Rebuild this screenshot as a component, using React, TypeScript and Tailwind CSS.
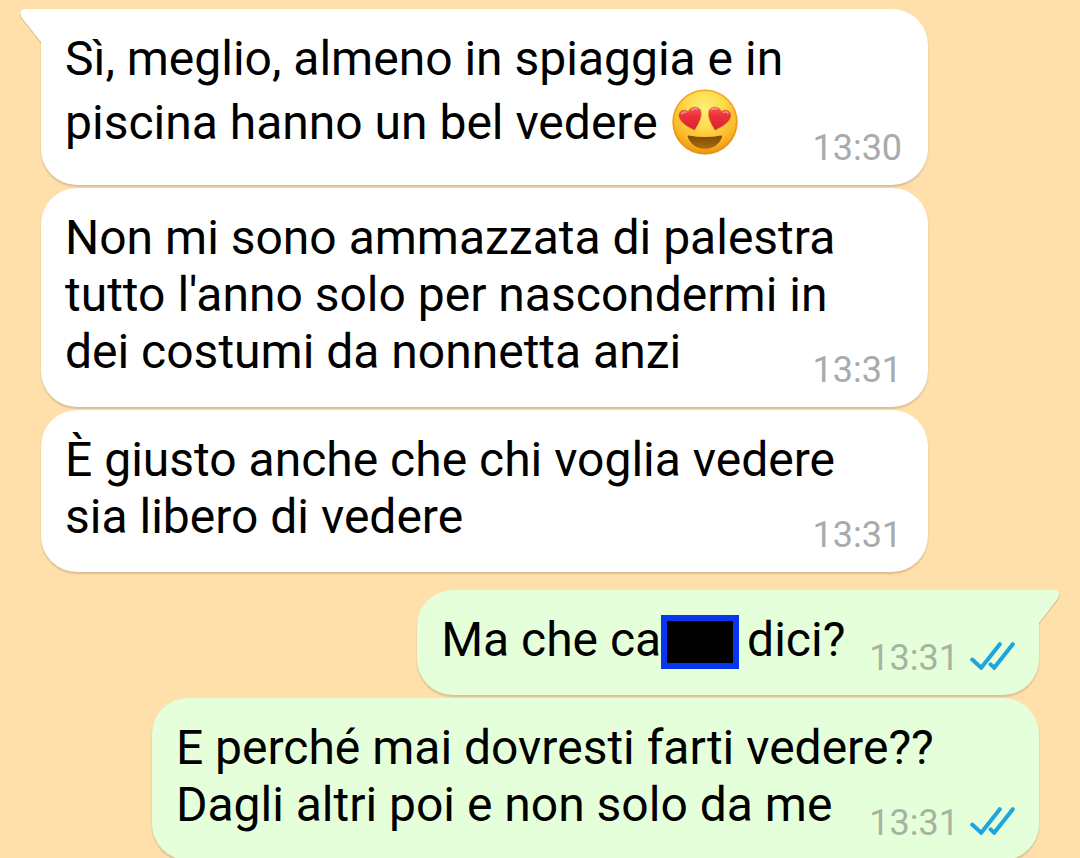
import type { ReactNode } from 'react';

interface Message {
  id: number;
  outgoing: boolean;
  time: string;
  lines: ReactNode[];
  // first message of a group gets the little tail
  tail?: boolean;
  // one-liners hug their text, the others take the full bubble width
  compact?: boolean;
}

function HeartEyes() {
  return (
    <svg
      viewBox="0 0 66 66"
      role="img"
      aria-label="😍"
      className="mt-0.5 mb-[3px] ml-0.5 inline-block size-[66px] align-[-19px]"
    >
      <defs>
        <radialGradient id="face" cx="0.5" cy="0.3" r="0.72">
          <stop offset="0" stopColor="#fff07a" />
          <stop offset="0.4" stopColor="#fedb4c" />
          <stop offset="0.75" stopColor="#fbb524" />
          <stop offset="1" stopColor="#e98c10" />
        </radialGradient>
        <linearGradient id="heart" x1="0" y1="0" x2="0" y2="1">
          <stop offset="0" stopColor="#f0575a" />
          <stop offset="0.4" stopColor="#ee3038" />
          <stop offset="1" stopColor="#d62330" />
        </linearGradient>
        <linearGradient id="mouth" x1="0" y1="0" x2="0" y2="1">
          <stop offset="0" stopColor="#7d4a06" />
          <stop offset="1" stopColor="#a56c10" />
        </linearGradient>
      </defs>
      <circle cx="33" cy="33" r="32.6" fill="url(#face)" />
      <circle cx="33" cy="33" r="31.8" fill="none" stroke="#e08a1a" strokeOpacity="0.6" strokeWidth="1.5" />
      <path
        d="M22.6 41.2C18 39 8.6 34.5 7 27.8C5.8 22.5 11.2 18.8 16.2 22.5C18.3 17 26.5 16.2 28.8 21.6C31 27.5 25.8 36 22.6 41.2Z"
        fill="url(#heart)"
        stroke="#d98a1c"
        strokeOpacity="0.6"
        strokeWidth="0.8"
      />
      <path
        d="M43 41.2C39.8 36 34.8 27.5 37 21.6C39.2 16.2 47.4 17 49.5 22.5C54.5 18.8 60 22.5 58.8 27.8C57.2 34.5 47.6 39 43 41.2Z"
        fill="url(#heart)"
        stroke="#d98a1c"
        strokeOpacity="0.6"
        strokeWidth="0.8"
      />
      <path d="M10 24.5Q11.5 22.3 14 23.2M20 21Q22 18.8 25 19.8" fill="none" stroke="#fa9a92" strokeWidth="1.4" strokeLinecap="round" />
      <path d="M39.5 20.8Q42 18.6 45 20.2M51.5 23.5Q54 22 56 24" fill="none" stroke="#fa9a92" strokeWidth="1.4" strokeLinecap="round" />
      <path
        d="M16.2 46.4Q33 49.5 49.4 46.4Q50.4 46.6 50 48C47.5 55.5 41 59.8 33 59.8C25 59.8 18.4 55.5 15.8 48Q15.3 46.6 16.2 46.4Z"
        fill="url(#mouth)"
      />
    </svg>
  );
}

function Ticks() {
  return (
    <svg viewBox="0 1 45 28" role="img" aria-label="Letto" className="mb-1 h-7 w-[45px] shrink-0">
      <g fill="none" stroke="#1ea5dc" strokeWidth="4" strokeLinecap="round" strokeLinejoin="miter">
        <path d="M2.2 18.6L11.2 26.8L29.8 3.2" />
        <path d="M20.6 23.4L24.2 26.8L42.8 3.2" />
      </g>
    </svg>
  );
}

function Tail({ outgoing }: { outgoing: boolean }) {
  return outgoing ? (
    <svg viewBox="0 0 24 36" aria-hidden="true" className="absolute top-0 -right-[22px] h-9 w-6 text-[#e5ffda]">
      <path d="M2 2H18Q22.4 2.5 22.6 6Q22.4 8.5 20.4 11L2 34.5Z" fill="black" fillOpacity="0.14" />
      <path d="M0 0H18Q21.8 0.3 22 4.5Q22 7 20 9.5L2 33H0Z" fill="currentColor" />
    </svg>
  ) : (
    <svg viewBox="0 0 24 36" aria-hidden="true" className="absolute top-0 -left-[22px] h-9 w-6 text-white">
      <path d="M22 2H6Q1.2 2.5 1 6Q1.2 8.5 3.200 11L22 34.5Z" fill="black" fillOpacity="0.14" />
      <path d="M24 0H5.500Q1.600 0.300 1.400 4.500Q1.400 7 3.400 9.500L22 33H24Z" fill="currentColor" />
    </svg>
  );
}

const MESSAGES: Message[] = [
  {
    id: 1,
    outgoing: false,
    time: '13:30',
    tail: true,
    lines: [
      'Sì, meglio, almeno in spiaggia e in',
      <>
        {'piscina hanno un bel vedere '}
        <HeartEyes />
      </>,
    ],
  },
  {
    id: 2,
    outgoing: false,
    time: '13:31',
    lines: [
      'Non mi sono ammazzata di palestra',
      "tutto l'anno solo per nascondermi in",
      'dei costumi da nonnetta anzi',
    ],
  },
  {
    id: 3,
    outgoing: false,
    time: '13:31',
    lines: ['È giusto anche che chi voglia vedere', 'sia libero di vedere'],
  },
  {
    id: 4,
    outgoing: true,
    time: '13:31',
    tail: true,
    compact: true,
    lines: [
      <>
        Ma che ca
        <span className="-my-2 -mr-1 inline-block h-[54px] w-[78px] border-[6px] border-[#0a35f0] bg-black align-[-5px]" />
        {' dici?'}
      </>,
    ],
  },
  {
    id: 5,
    outgoing: true,
    time: '13:31',
    lines: ['E perché mai dovresti farti vedere??', 'Dagli altri poi e non solo da me'],
  },
];

function Bubble({ message }: { message: Message }) {
  const { outgoing, tail, compact, time, lines } = message;
  const side = outgoing ? 'self-end bg-[#e5ffda] pr-6' : 'self-start bg-white pr-[26px]';
  const corner = !tail ? '' : outgoing ? 'rounded-tr-none' : 'rounded-tl-none';
  const group = tail && outgoing ? 'mt-[15px]' : '';

  return (
    <li
      className={`relative grid shrink-0 items-end rounded-[36px] py-[21px] pl-6 shadow-[0_2px_2px_rgba(0,0,0,0.15)] ${side} ${corner} ${group} ${
        compact ? 'grid-cols-[auto_auto] gap-x-6' : 'w-8/9'
      }`}
    >
      {tail && <Tail outgoing={outgoing} />}
      <div className="col-start-1 row-start-1 pb-1.5 text-5xl/[57px] text-black">
        {lines.map((line, i) => (
          <p key={i} className="w-fit">
            {line}
          </p>
        ))}
      </div>
      <div
        className={`row-start-1 flex items-center gap-[11px] justify-self-end text-4xl/8 ${
          outgoing ? 'text-[#a6b3a2]' : 'text-[#a8abae]'
        } ${compact ? 'col-start-2' : 'col-start-1'}`}
      >
        <time>{time}</time>
        {outgoing && <Ticks />}
      </div>
    </li>
  );
}

export default function App() {
  return (
    <main className="h-screen overflow-hidden bg-[#ffdfaa] font-['Roboto',sans-serif]">
      <ul className="flex flex-col gap-[3px] px-[41px] pt-[9px]">
        {MESSAGES.map((message) => (
          <Bubble key={message.id} message={message} />
        ))}
      </ul>
    </main>
  );
}
